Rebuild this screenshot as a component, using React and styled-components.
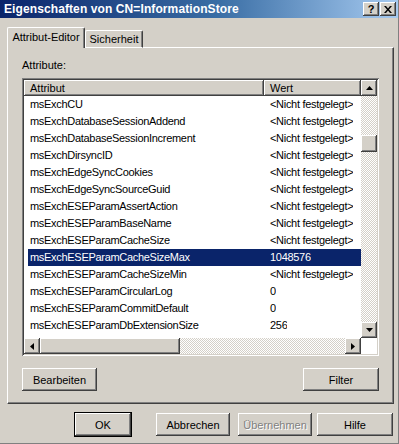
import { createGlobalStyle } from "styled-components";
import styled from "styled-components";

const FACE = "#d4d0c8";
const NAVY = "#0a246a";

const GlobalStyle = createGlobalStyle`
  html, body {
    margin: 0;
    padding: 0;
    background: ${FACE};
  }
  * {
    box-sizing: border-box;
  }
  body {
    font-family: "Liberation Sans", Arial, sans-serif;
    font-size: 11px;
    color: #000;
  }
`;

const rows = [
  ["msExchCU", "<Nicht festgelegt>"],
  ["msExchDatabaseSessionAddend", "<Nicht festgelegt>"],
  ["msExchDatabaseSessionIncrement", "<Nicht festgelegt>"],
  ["msExchDirsyncID", "<Nicht festgelegt>"],
  ["msExchEdgeSyncCookies", "<Nicht festgelegt>"],
  ["msExchEdgeSyncSourceGuid", "<Nicht festgelegt>"],
  ["msExchESEParamAssertAction", "<Nicht festgelegt>"],
  ["msExchESEParamBaseName", "<Nicht festgelegt>"],
  ["msExchESEParamCacheSize", "<Nicht festgelegt>"],
  ["msExchESEParamCacheSizeMax", "1048576"],
  ["msExchESEParamCacheSizeMin", "<Nicht festgelegt>"],
  ["msExchESEParamCircularLog", "0"],
  ["msExchESEParamCommitDefault", "0"],
  ["msExchESEParamDbExtensionSize", "256"],
  ["msExchESEParamEnableIndexChecking", "TRUE"],
];

export default function App() {
  const selected = 9;

  return (
    <Window>
      <GlobalStyle />
      <TitleBar>
        <Title>Eigenschaften von CN=InformationStore</Title>
        <TitleButtons>
          <CaptionBtn>?</CaptionBtn>
          <CaptionBtn>
            <svg width="8" height="7" viewBox="0 0 8 7">
              <path d="M0 0h2l2 2.5L6 0h2L5 3.5 8 7H6L4 4.5 2 7H0l3-3.5z" fill="#000" />
            </svg>
          </CaptionBtn>
        </TitleButtons>
      </TitleBar>

      <Body>
        <TabStrip>
          <Tab $active>Attribut-Editor</Tab>
          <Tab>Sicherheit</Tab>
        </TabStrip>

        <Panel>
          <Label>Attribute:</Label>
          <ListBox>
            <ListMain>
              <ListArea>
                <Header>
                  <HeadCell $w={240}>Attribut</HeadCell>
                  <HeadCell $w={97}>Wert</HeadCell>
                </Header>
                <Rows>
                  {rows.map(([name, value], i) => (
                    <Row key={name} $sel={i === selected}>
                      <NameCell>{name}</NameCell>
                      <ValueCell>{value}</ValueCell>
                    </Row>
                  ))}
                </Rows>
              </ListArea>
              <VScroll>
                <ArrowBtn>
                  <svg width="7" height="4" viewBox="0 0 7 4">
                    <path d="M3.5 0L7 4H0z" fill="#000" />
                  </svg>
                </ArrowBtn>
                <Track $vertical>
                  <Thumb style={{ marginTop: 39, height: 17 }} />
                </Track>
                <ArrowBtn>
                  <svg width="7" height="4" viewBox="0 0 7 4">
                    <path d="M0 0h7L3.5 4z" fill="#000" />
                  </svg>
                </ArrowBtn>
              </VScroll>
            </ListMain>
            <HScrollRow>
              <HScroll>
                <ArrowBtn>
                  <svg width="4" height="7" viewBox="0 0 4 7">
                    <path d="M0 3.5L4 0v7z" fill="#000" />
                  </svg>
                </ArrowBtn>
                <Track>
                  <Thumb style={{ width: 140 }} />
                </Track>
                <ArrowBtn>
                  <svg width="4" height="7" viewBox="0 0 4 7">
                    <path d="M0 0l4 3.5L0 7z" fill="#000" />
                  </svg>
                </ArrowBtn>
              </HScroll>
              <SizeCorner />
            </HScrollRow>
          </ListBox>

          <PanelButtons>
            <Button $w={75}>Bearbeiten</Button>
            <Button $w={76}>Filter</Button>
          </PanelButtons>
        </Panel>

        <DialogButtons>
          <Button $w={56} $default>OK</Button>
          <Button $w={74} $ml={25}>Abbrechen</Button>
          <Button $w={74} $ml={8} $disabled>Übernehmen</Button>
          <Button $w={76} $ml={5}>Hilfe</Button>
        </DialogButtons>
      </Body>
    </Window>
  );
}

const Window = styled.div`
  width: 399px;
  height: 444px;
  background: ${FACE};
  border-right: 1px solid #808080;
  border-bottom: 1px solid #808080;
  display: flex;
  flex-direction: column;
  overflow: hidden;
`;

const TitleBar = styled.div`
  height: 18px;
  flex: none;
  background: linear-gradient(to right, ${NAVY} 0%, #3a6ea5 55%, #a6caf0 100%);
  display: flex;
  align-items: center;
  justify-content: space-between;
  padding: 0 2px 0 4px;
`;

const Title = styled.div`
  color: #fff;
  font-weight: bold;
  font-size: 12px;
  letter-spacing: 0.1px;
  white-space: nowrap;
`;

const TitleButtons = styled.div`
  display: flex;
  gap: 1px;
`;

const raised = `
  background: ${FACE};
  box-shadow: inset -1px -1px #404040, inset 1px 1px #fff,
    inset -2px -2px #808080, inset 2px 2px ${FACE};
`;

const CaptionBtn = styled.div`
  ${raised}
  width: 16px;
  height: 14px;
  display: flex;
  align-items: center;
  justify-content: center;
  font-weight: bold;
  font-size: 11px;
  line-height: 1;
`;

const Body = styled.div`
  flex: 1;
  display: flex;
  flex-direction: column;
  padding: 9px 5px 0 7px;
`;

const TabStrip = styled.div`
  display: flex;
  align-items: flex-end;
  height: 21px;
  position: relative;
  z-index: 1;
  margin-bottom: -1px;
`;

const Tab = styled.div`
  height: ${(p) => (p.$active ? "21px" : "18px")};
  width: ${(p) => (p.$active ? "78px" : "58px")};
  background: ${FACE};
  border-top: 1px solid #fff;
  border-left: 1px solid #fff;
  border-right: 1px solid #404040;
  box-shadow: inset -1px 0 #808080;
  border-radius: 2px 2px 0 0;
  display: flex;
  align-items: center;
  justify-content: center;
  padding-bottom: ${(p) => (p.$active ? "2px" : "0")};
  white-space: nowrap;
  border-bottom: ${(p) => (p.$active ? "none" : "1px solid #fff")};
`;

const Panel = styled.div`
  width: 387px;
  height: 357px;
  flex: none;
  border-top: 1px solid #fff;
  border-left: 1px solid #fff;
  border-right: 1px solid #404040;
  border-bottom: 1px solid #404040;
  box-shadow: inset -1px -1px #808080;
  padding: 11px 0 0 14px;
  display: flex;
  flex-direction: column;
`;

const Label = styled.div`
  height: 19px;
  line-height: 13px;
`;

const ListBox = styled.div`
  width: 357px;
  height: 278px;
  padding: 2px;
  background: #fff;
  box-shadow: inset 1px 1px #808080, inset -1px -1px #fff,
    inset 2px 2px #404040, inset -2px -2px ${FACE};
  display: flex;
  flex-direction: column;
`;

const ListMain = styled.div`
  flex: 1;
  display: flex;
  min-height: 0;
`;

const ListArea = styled.div`
  flex: 1;
  overflow: hidden;
  display: flex;
  flex-direction: column;
`;

const Header = styled.div`
  display: flex;
  height: 16px;
  flex: none;
`;

const HeadCell = styled.div`
  ${raised}
  width: ${(p) => p.$w}px;
  flex: none;
  padding-left: 6px;
  line-height: 16px;
`;

const Rows = styled.div`
  flex: 1;
  overflow: hidden;
`;

const Row = styled.div`
  display: flex;
  height: 17px;
  line-height: 17px;
  margin-left: 4px;
  white-space: nowrap;
  letter-spacing: -0.3px;
  background: ${(p) => (p.$sel ? NAVY : "transparent")};
  color: ${(p) => (p.$sel ? "#fff" : "#000")};
`;

const NameCell = styled.div`
  width: 236px;
  flex: none;
  padding-left: 2px;
  overflow: hidden;
`;

const ValueCell = styled.div`
  padding-left: 6px;
  overflow: hidden;
`;

const VScroll = styled.div`
  width: 16px;
  flex: none;
  display: flex;
  flex-direction: column;
`;

const HScrollRow = styled.div`
  display: flex;
  height: 16px;
  flex: none;
`;

const HScroll = styled.div`
  flex: 1;
  display: flex;
`;

const SizeCorner = styled.div`
  width: 16px;
  background: #fff;
`;

const ArrowBtn = styled.div`
  ${raised}
  width: 16px;
  height: 16px;
  flex: none;
  display: flex;
  align-items: center;
  justify-content: center;
`;

const Track = styled.div`
  flex: 1;
  display: flex;
  flex-direction: ${(p) => (p.$vertical ? "column" : "row")};
  background: repeating-conic-gradient(#fff 0 25%, ${FACE} 0 50%) 0 0 / 2px 2px;
`;

const Thumb = styled.div`
  ${raised}
  flex: none;
  min-width: 16px;
  min-height: 16px;
`;

const PanelButtons = styled.div`
  display: flex;
  justify-content: space-between;
  width: 357px;
  margin-top: 12px;
`;

const Button = styled.div`
  ${raised}
  width: ${(p) => p.$w}px;
  height: 23px;
  margin-left: ${(p) => p.$ml || 0}px;
  display: flex;
  align-items: center;
  justify-content: center;
  white-space: nowrap;
  color: ${(p) => (p.$disabled ? "#808080" : "#000")};
  text-shadow: ${(p) => (p.$disabled ? "1px 1px #fff" : "none")};
  ${(p) =>
    p.$default &&
    `
    outline: 1px solid #000;
  `}
`;

const DialogButtons = styled.div`
  display: flex;
  padding-left: 68px;
  margin-top: 9px;
`;
